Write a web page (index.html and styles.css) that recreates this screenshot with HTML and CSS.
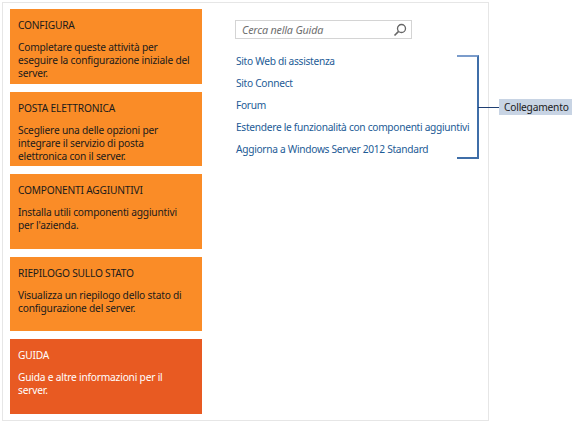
FILE: index.html
```html
<!DOCTYPE html>
<html lang="it">
<head>
<meta charset="utf-8">
<link rel="stylesheet" href="styles.css">
</head>
<body>
<div class="frame">
  <div class="tiles">
    <div class="tile">
      <div class="tile-title">CONFIGURA</div>
      <div class="tile-text">Completare queste attività per eseguire la configurazione iniziale del server.</div>
    </div>
    <div class="tile">
      <div class="tile-title">POSTA ELETTRONICA</div>
      <div class="tile-text">Scegliere una delle opzioni per integrare il servizio di posta elettronica con il server.</div>
    </div>
    <div class="tile">
      <div class="tile-title">COMPONENTI AGGIUNTIVI</div>
      <div class="tile-text">Installa utili componenti aggiuntivi per l'azienda.</div>
    </div>
    <div class="tile">
      <div class="tile-title">RIEPILOGO SULLO STATO</div>
      <div class="tile-text">Visualizza un riepilogo dello stato di configurazione del server.</div>
    </div>
    <div class="tile tile-active">
      <div class="tile-title">GUIDA</div>
      <div class="tile-text">Guida e altre informazioni per il server.</div>
    </div>
  </div>
  <div class="help">
    <div class="search">
      <span class="search-placeholder">Cerca nella Guida</span>
      <svg class="search-icon" width="14" height="14" viewBox="0 0 14 14">
        <circle cx="8.5" cy="5.5" r="4" fill="none" stroke="#666" stroke-width="1.3"/>
        <line x1="5.6" y1="8.4" x2="1.5" y2="12.5" stroke="#666" stroke-width="1.6"/>
      </svg>
    </div>
    <ul class="links">
      <li>Sito Web di assistenza</li>
      <li>Sito Connect</li>
      <li>Forum</li>
      <li>Estendere le funzionalità con componenti aggiuntivi</li>
      <li>Aggiorna a Windows Server 2012 Standard</li>
    </ul>
  </div>
</div>
<div class="callout">
  <div class="bracket"></div>
  <div class="connector"></div>
  <div class="callout-label">Collegamento</div>
</div>
</body>
</html>
```
FILE: styles.css
```css
html, body {
  margin: 0;
  padding: 0;
  background: #ffffff;
}
body {
  font-family: "Noto Sans", "Open Sans", sans-serif;
  font-size: 10.2px;
  letter-spacing: -0.2px;
  width: 578px;
  height: 423px;
  position: relative;
  overflow: hidden;
}
.frame {
  box-sizing: border-box;
  margin: 2px 0 0 2px;
  width: 487px;
  height: 419px;
  border: 1px solid #e6e6e6;
  display: flex;
  padding: 6px 0 0 7px;
  gap: 33px;
}
.tiles {
  display: flex;
  flex-direction: column;
  gap: 8px;
  width: 192px;
  flex-shrink: 0;
}
.tile {
  box-sizing: border-box;
  height: 74.5px;
  background: #fa8c27;
  color: #1b1b1b;
  padding: 8px 8px 0 8px;
}
.tile-active {
  background: #e85a22;
  color: #ffffff;
}
.tile-title {
  line-height: 16px;
  margin-bottom: 8px;
}
.tile-text {
  line-height: 13px;
}
.help {
  padding-top: 11px;
}
.search {
  box-sizing: border-box;
  width: 177px;
  height: 19px;
  border: 1px solid #d4d4d4;
  display: flex;
  align-items: center;
  justify-content: space-between;
  padding: 0 4px 0 6px;
}
.search-placeholder {
  font-style: italic;
  color: #6f6f6f;
  font-size: 10.8px;
}
.links {
  list-style: none;
  margin: 16px 0 0 1px;
  padding: 0;
  color: #1d5b96;
  white-space: nowrap;
  letter-spacing: -0.3px;
}
.links li {
  height: 22px;
  line-height: 13px;
}
.callout {
  position: absolute;
  left: 457px;
  top: 55px;
}
.bracket {
  position: absolute;
  left: 0;
  top: 0;
  width: 22px;
  height: 104px;
  box-sizing: border-box;
  border: 2px solid #3f6ea8;
  border-left: none;
  border-top-color: #7b9ccb;
  border-bottom-color: #3f6ea8;
}
.connector {
  position: absolute;
  left: 21px;
  top: 52px;
  width: 21px;
  height: 1px;
  background: #1f3f73;
}
.callout-label {
  position: absolute;
  left: 42px;
  top: 44px;
  width: 73px;
  height: 16px;
  background: #c8d4e4;
  color: #1a1a1a;
  line-height: 16px;
  padding-left: 5px;
  box-sizing: border-box;
  white-space: nowrap;
}
```
